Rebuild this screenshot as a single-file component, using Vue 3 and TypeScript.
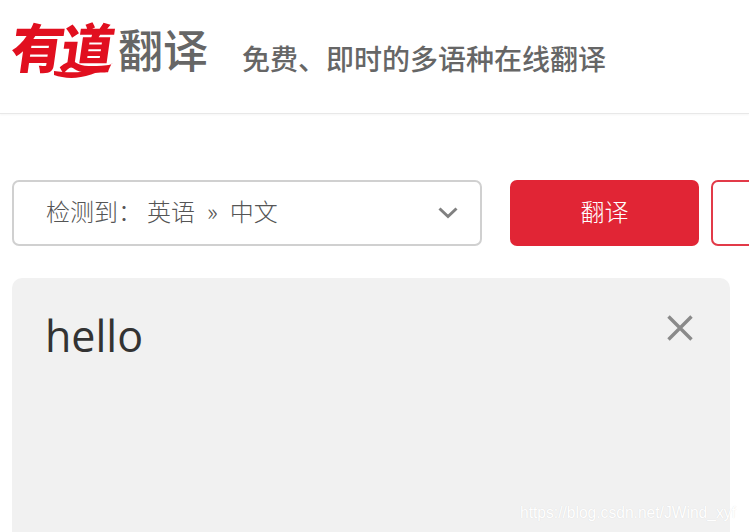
<script setup lang="ts">
const title = '免费、即时的多语种在线翻译'
</script>

<template>
  <div class="page">
    <header class="header">
      <div class="logo">
        <span class="logo-mark">
          <span class="logo-chars">有道</span>
          <svg class="swoosh" width="60" height="18" viewBox="0 0 60 18">
            <path d="M0 13 C14 18 36 18 59 1 C44 10 20 12 0 9 Z" fill="#e10f1f" />
          </svg>
        </span>
        <span class="logo-word">翻译</span>
      </div>
      <div class="slogan">{{ title }}</div>
    </header>
    <section class="toolbar">
      <div class="select">
        <span class="select-text">
          <span class="detected">检测到：</span><span>英语</span><span class="arrow">»</span><span>中文</span>
        </span>
        <svg class="chevron" width="20" height="12" viewBox="0 0 20 12">
          <path d="M1.5 1.5 L10 9.5 L18.5 1.5" fill="none" stroke="#808080" stroke-width="3" />
        </svg>
      </div>
      <button class="btn-primary"><span class="btn-label">翻译</span></button>
      <div class="btn-outline"></div>
    </section>
    <section class="panel">
      <div class="input-text">hello</div>
      <svg class="close" width="26" height="26" viewBox="0 0 26 26">
        <path d="M1.5 1.5 L24.5 24.5 M24.5 1.5 L1.5 24.5" stroke="#8a8a8a" stroke-width="3.4" fill="none" />
      </svg>
    </section>
    <div class="watermark">https://blog.csdn.net/JWind_xyf</div>
  </div>
</template>

<style>
html, body { margin: 0; background: #fff; overflow: hidden; }
</style>

<style scoped>
.page {
  position: relative;
  width: 749px;
  height: 532px;
  overflow: hidden;
  background: #fff;
  font-family: "Noto Sans CJK SC", sans-serif;
}
.header {
  height: 114px;
  box-sizing: border-box;
  border-bottom: 1px solid #e8e8e8;
  box-shadow: 0 1px 2px rgba(0, 0, 0, 0.04);
  display: flex;
  align-items: flex-start;
  padding: 0 0 0 12px;
}
.logo {
  display: flex;
  align-items: flex-start;
  width: 230px;
  flex: none;
}
.logo-mark {
  position: relative;
  width: 106px;
  height: 100px;
  flex: none;
}
.logo-chars {
  display: block;
  margin-top: 17px;
  font-size: 53px;
  line-height: 56px;
  font-weight: 900;
  color: #e10f1f;
  letter-spacing: -3px;
  white-space: nowrap;
  transform: skewX(-8deg);
}
.swoosh {
  position: absolute;
  left: 42px;
  top: 62px;
}
.logo-word {
  margin-top: 22px;
  font-size: 45px;
  line-height: 54px;
  font-weight: 500;
  color: #666;
  white-space: nowrap;
}
.slogan {
  margin-top: 40px;
  font-size: 28px;
  line-height: 36px;
  font-weight: 500;
  color: #666;
  white-space: nowrap;
}
.toolbar {
  margin-top: 66px;
  padding-left: 12px;
  display: flex;
  height: 66px;
}
.select {
  width: 470px;
  flex: none;
  box-sizing: border-box;
  border: 2px solid #d0d0d0;
  border-radius: 7px;
  display: flex;
  align-items: center;
  justify-content: space-between;
  padding: 0 22px 0 32px;
}
.select-text {
  display: flex;
  margin-top: -6px;
  font-size: 24px;
  font-weight: 300;
  color: #555;
  white-space: nowrap;
}
.detected {
  margin-right: 5px;
}
.arrow {
  margin: 0 12px;
}
.btn-primary {
  margin-left: 28px;
  width: 189px;
  flex: none;
  border: none;
  border-radius: 7px;
  background: #e12535;
  color: #fff;
  font-family: inherit;
  font-size: 24px;
  font-weight: 300;
  padding: 0 0 6px;
}
.btn-outline {
  margin-left: 12px;
  width: 189px;
  flex: none;
  box-sizing: border-box;
  border: 2px solid #e23a48;
  border-radius: 7px;
}
.panel {
  position: relative;
  margin: 32px 0 0 12px;
  width: 718px;
  height: 300px;
  background: #f1f1f1;
  border-radius: 10px;
}
.input-text {
  padding: 28px 0 0 33px;
  font-family: "Open Sans", "Noto Sans", sans-serif;
  font-size: 43px;
  line-height: 60px;
  color: #333;
}
.close {
  position: absolute;
  top: 37px;
  right: 37px;
}
.watermark {
  position: absolute;
  left: 520px;
  top: 502px;
  font-family: "Liberation Sans", sans-serif;
  font-size: 15.6px;
  line-height: 22px;
  color: #fff;
  text-shadow: 0 0 1px rgba(0, 0, 0, 0.12);
  white-space: nowrap;
}
</style>
